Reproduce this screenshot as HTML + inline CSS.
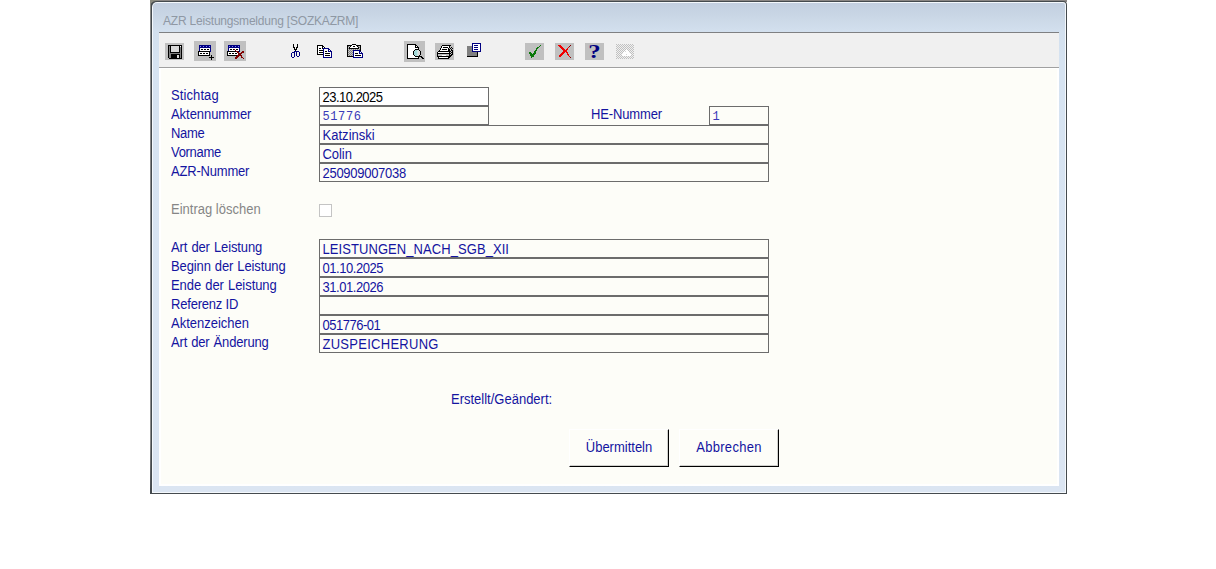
<!DOCTYPE html>
<html lang="de"><head><meta charset="utf-8"><title>AZR Leistungsmeldung</title>
<style>
html,body{margin:0;padding:0;background:#fff;}
body{width:1216px;height:569px;position:relative;overflow:hidden;font-family:"Liberation Sans",sans-serif;font-size:13px;color:#1414a0;}
.abs{position:absolute;}
#topstrip{left:150px;top:0;width:917px;height:2px;background:#8a8684;}
#corner{left:150px;top:0;width:8px;height:8px;background:#8a8a7e;}
#win{left:150px;top:1px;width:917px;height:493px;box-sizing:border-box;border-radius:6px 4px 0 0;background:#444a4e;}
#frame{left:152px;top:2px;width:914px;height:491px;border-radius:5px 3px 0 0;background:#f4f8fc;}
#frame2{left:153px;top:3px;width:912px;height:489px;border-radius:4px 2px 0 0;background:linear-gradient(#c3cfe0 0px,#c9d6e5 12px,#d3e0ee 29px,#d6e3f1 60px,#dbe5f2 489px);}
#title{left:163px;top:14px;font-size:12px;line-height:15px;color:#8f98a4;white-space:nowrap;letter-spacing:-0.2px;}
#tbline{left:159px;top:32px;width:900px;height:1px;background:#7f8082;}
#toolbar{left:159px;top:33px;width:900px;height:34px;background:#f0f0f0;}
#tbline2{left:159px;top:67px;width:900px;height:1px;background:#a0a0a0;}
#content{left:159px;top:68px;width:900px;height:418px;background:#fdfdf8;box-sizing:border-box;border:solid #fff;border-width:1px 2px 2px 2px;}
.lbl{position:absolute;left:171px;line-height:15px;white-space:nowrap;transform:scaleY(1.08);transform-origin:0 12px;}
.box{position:absolute;box-sizing:border-box;border:1px solid #6c6c6c;height:19px;left:319px;width:450px;line-height:15px;padding:2px 0 0 2.5px;white-space:nowrap;background:#fdfdf8;}
.box span{display:inline-block;transform:scaleY(1.08);transform-origin:0 12px;}
.mono{font-family:"Liberation Mono",monospace;font-size:12px;color:#3a3ab8;}
.mono span{transform:none !important;position:relative;top:1px;}
.btn{position:absolute;box-sizing:border-box;top:429px;width:100px;height:38px;border-top:1px solid #fff;border-left:1px solid #fff;border-right:1px solid #000;border-bottom:1px solid #000;background:#fdfdf8;text-align:center;line-height:15px;padding-top:10px;}
.btn span{display:inline-block;transform:scaleY(1.08);transform-origin:0 12px;}
.btn i{position:absolute;left:0;top:0;right:0;bottom:0;border-right:1px solid #d0d0cc;border-bottom:1px solid #d0d0cc;}
#q{left:585px;top:42px;width:19px;height:19px;text-align:center;font-family:"Liberation Serif",serif;font-weight:bold;font-size:19px;line-height:19px;color:#000080;transform:scaleX(1.3);}
</style></head><body>
<div class="abs" id="topstrip"></div>
<div class="abs" id="corner"></div>
<div class="abs" id="win"></div>
<div class="abs" style="left:150px;top:0;width:1px;height:488px;background:linear-gradient(#8a8a80,#8a8a8a 20px,#8a8a8a 440px,#4a4e52)"></div>
<div class="abs" id="frame"></div>
<div class="abs" id="frame2"></div>
<div class="abs" id="title">AZR Leistungsmeldung [SOZKAZRM]</div>
<div class="abs" id="tbline"></div>
<div class="abs" id="toolbar"></div>
<div class="abs" id="tbline2"></div>
<div class="abs" id="content"></div>
<svg class="abs" style="left:0;top:0" width="1216" height="569" shape-rendering="crispEdges">
<defs><pattern id="dith" x="0" y="0" width="2" height="2" patternUnits="userSpaceOnUse"><rect width="2" height="2" fill="#f0f0f0"/><rect x="0" y="0" width="1" height="1" fill="#c0c0c0"/><rect x="1" y="1" width="1" height="1" fill="#c0c0c0"/></pattern></defs>
<rect x="165" y="43" width="19" height="17" fill="#c0c0c0"/><rect x="168" y="45" width="14" height="1" fill="#000000"/><rect x="168" y="46" width="1" height="1" fill="#000000"/><rect x="169" y="46" width="1" height="1" fill="#808080"/><rect x="170" y="46" width="1" height="1" fill="#000000"/><rect x="171" y="46" width="8" height="1" fill="#d8d8d8"/><rect x="179" y="46" width="1" height="1" fill="#000000"/><rect x="180" y="46" width="1" height="1" fill="#ffffff"/><rect x="181" y="46" width="1" height="1" fill="#000000"/><rect x="168" y="47" width="1" height="1" fill="#000000"/><rect x="169" y="47" width="1" height="1" fill="#808080"/><rect x="170" y="47" width="1" height="1" fill="#000000"/><rect x="171" y="47" width="8" height="1" fill="#d8d8d8"/><rect x="179" y="47" width="1" height="1" fill="#000000"/><rect x="180" y="47" width="1" height="1" fill="#808080"/><rect x="181" y="47" width="1" height="1" fill="#000000"/><rect x="168" y="48" width="1" height="1" fill="#000000"/><rect x="169" y="48" width="1" height="1" fill="#808080"/><rect x="170" y="48" width="1" height="1" fill="#000000"/><rect x="171" y="48" width="8" height="1" fill="#d8d8d8"/><rect x="179" y="48" width="1" height="1" fill="#000000"/><rect x="180" y="48" width="1" height="1" fill="#808080"/><rect x="181" y="48" width="1" height="1" fill="#000000"/><rect x="168" y="49" width="1" height="1" fill="#000000"/><rect x="169" y="49" width="1" height="1" fill="#808080"/><rect x="170" y="49" width="1" height="1" fill="#000000"/><rect x="171" y="49" width="8" height="1" fill="#d8d8d8"/><rect x="179" y="49" width="1" height="1" fill="#000000"/><rect x="180" y="49" width="1" height="1" fill="#808080"/><rect x="181" y="49" width="1" height="1" fill="#000000"/><rect x="168" y="50" width="1" height="1" fill="#000000"/><rect x="169" y="50" width="1" height="1" fill="#808080"/><rect x="170" y="50" width="1" height="1" fill="#000000"/><rect x="171" y="50" width="8" height="1" fill="#d8d8d8"/><rect x="179" y="50" width="1" height="1" fill="#000000"/><rect x="180" y="50" width="1" height="1" fill="#808080"/><rect x="181" y="50" width="1" height="1" fill="#000000"/><rect x="168" y="51" width="1" height="1" fill="#000000"/><rect x="169" y="51" width="1" height="1" fill="#808080"/><rect x="170" y="51" width="1" height="1" fill="#000000"/><rect x="171" y="51" width="8" height="1" fill="#d8d8d8"/><rect x="179" y="51" width="1" height="1" fill="#000000"/><rect x="180" y="51" width="1" height="1" fill="#808080"/><rect x="181" y="51" width="1" height="1" fill="#000000"/><rect x="168" y="52" width="1" height="1" fill="#000000"/><rect x="169" y="52" width="1" height="1" fill="#808080"/><rect x="170" y="52" width="10" height="1" fill="#000000"/><rect x="180" y="52" width="1" height="1" fill="#808080"/><rect x="181" y="52" width="1" height="1" fill="#000000"/><rect x="168" y="53" width="1" height="1" fill="#000000"/><rect x="169" y="53" width="12" height="1" fill="#808080"/><rect x="181" y="53" width="1" height="1" fill="#000000"/><rect x="168" y="54" width="1" height="1" fill="#000000"/><rect x="169" y="54" width="2" height="1" fill="#808080"/><rect x="171" y="54" width="9" height="1" fill="#000000"/><rect x="180" y="54" width="1" height="1" fill="#808080"/><rect x="181" y="54" width="1" height="1" fill="#000000"/><rect x="168" y="55" width="1" height="1" fill="#000000"/><rect x="169" y="55" width="2" height="1" fill="#808080"/><rect x="171" y="55" width="6" height="1" fill="#000000"/><rect x="177" y="55" width="2" height="1" fill="#d8d8d8"/><rect x="179" y="55" width="1" height="1" fill="#000000"/><rect x="180" y="55" width="1" height="1" fill="#808080"/><rect x="181" y="55" width="1" height="1" fill="#000000"/><rect x="168" y="56" width="1" height="1" fill="#000000"/><rect x="169" y="56" width="2" height="1" fill="#808080"/><rect x="171" y="56" width="6" height="1" fill="#000000"/><rect x="177" y="56" width="2" height="1" fill="#d8d8d8"/><rect x="179" y="56" width="1" height="1" fill="#000000"/><rect x="180" y="56" width="1" height="1" fill="#808080"/><rect x="181" y="56" width="1" height="1" fill="#000000"/><rect x="168" y="57" width="1" height="1" fill="#000000"/><rect x="169" y="57" width="2" height="1" fill="#808080"/><rect x="171" y="57" width="6" height="1" fill="#000000"/><rect x="177" y="57" width="2" height="1" fill="#d8d8d8"/><rect x="179" y="57" width="1" height="1" fill="#000000"/><rect x="180" y="57" width="1" height="1" fill="#808080"/><rect x="181" y="57" width="1" height="1" fill="#000000"/><rect x="169" y="58" width="13" height="1" fill="#000000"/><rect x="194" y="41" width="22" height="20" fill="#c0c0c0"/><rect x="199" y="45" width="12" height="1" fill="#000080"/><rect x="199" y="46" width="1" height="1" fill="#000080"/><rect x="200" y="46" width="1" height="1" fill="#8080ff"/><rect x="201" y="46" width="2" height="1" fill="#000080"/><rect x="203" y="46" width="1" height="1" fill="#8080ff"/><rect x="204" y="46" width="2" height="1" fill="#000080"/><rect x="206" y="46" width="1" height="1" fill="#8080ff"/><rect x="207" y="46" width="2" height="1" fill="#000080"/><rect x="209" y="46" width="1" height="1" fill="#8080ff"/><rect x="210" y="46" width="1" height="1" fill="#000080"/><rect x="199" y="47" width="12" height="1" fill="#000080"/><rect x="199" y="48" width="1" height="1" fill="#000080"/><rect x="200" y="48" width="10" height="1" fill="#ffffff"/><rect x="210" y="48" width="1" height="1" fill="#000080"/><rect x="199" y="49" width="1" height="1" fill="#000080"/><rect x="200" y="49" width="1" height="1" fill="#ffffff"/><rect x="201" y="49" width="2" height="1" fill="#000000"/><rect x="203" y="49" width="1" height="1" fill="#ffffff"/><rect x="204" y="49" width="2" height="1" fill="#000000"/><rect x="206" y="49" width="1" height="1" fill="#ffffff"/><rect x="207" y="49" width="2" height="1" fill="#000000"/><rect x="209" y="49" width="1" height="1" fill="#ffffff"/><rect x="210" y="49" width="1" height="1" fill="#000080"/><rect x="199" y="50" width="1" height="1" fill="#000080"/><rect x="200" y="50" width="10" height="1" fill="#ffffff"/><rect x="210" y="50" width="1" height="1" fill="#000080"/><rect x="198" y="51" width="12" height="1" fill="#000000"/><rect x="210" y="51" width="1" height="1" fill="#000080"/><rect x="198" y="52" width="1" height="1" fill="#000000"/><rect x="199" y="52" width="10" height="1" fill="#ffffff"/><rect x="209" y="52" width="1" height="1" fill="#000000"/><rect x="198" y="53" width="1" height="1" fill="#000000"/><rect x="199" y="53" width="1" height="1" fill="#ffffff"/><rect x="200" y="53" width="2" height="1" fill="#000000"/><rect x="202" y="53" width="1" height="1" fill="#ffffff"/><rect x="203" y="53" width="2" height="1" fill="#000000"/><rect x="205" y="53" width="1" height="1" fill="#ffffff"/><rect x="206" y="53" width="2" height="1" fill="#000000"/><rect x="208" y="53" width="1" height="1" fill="#ffffff"/><rect x="209" y="53" width="1" height="1" fill="#000000"/><rect x="198" y="54" width="1" height="1" fill="#000000"/><rect x="199" y="54" width="10" height="1" fill="#ffffff"/><rect x="209" y="54" width="1" height="1" fill="#000000"/><rect x="198" y="55" width="12" height="1" fill="#000000"/><rect x="211" y="55" width="1" height="1" fill="#000000"/><rect x="211" y="56" width="1" height="1" fill="#000000"/><rect x="209" y="57" width="5" height="1" fill="#000000"/><rect x="211" y="58" width="1" height="1" fill="#000000"/><rect x="211" y="59" width="1" height="1" fill="#000000"/><rect x="224" y="41" width="22" height="20" fill="#c0c0c0"/><rect x="228" y="45" width="12" height="1" fill="#000080"/><rect x="228" y="46" width="1" height="1" fill="#000080"/><rect x="229" y="46" width="1" height="1" fill="#8080ff"/><rect x="230" y="46" width="2" height="1" fill="#000080"/><rect x="232" y="46" width="1" height="1" fill="#8080ff"/><rect x="233" y="46" width="2" height="1" fill="#000080"/><rect x="235" y="46" width="1" height="1" fill="#8080ff"/><rect x="236" y="46" width="2" height="1" fill="#000080"/><rect x="238" y="46" width="1" height="1" fill="#8080ff"/><rect x="239" y="46" width="1" height="1" fill="#000080"/><rect x="228" y="47" width="12" height="1" fill="#000080"/><rect x="228" y="48" width="1" height="1" fill="#000080"/><rect x="229" y="48" width="10" height="1" fill="#ffffff"/><rect x="239" y="48" width="1" height="1" fill="#000080"/><rect x="228" y="49" width="1" height="1" fill="#000080"/><rect x="229" y="49" width="1" height="1" fill="#ffffff"/><rect x="230" y="49" width="2" height="1" fill="#000000"/><rect x="232" y="49" width="1" height="1" fill="#ffffff"/><rect x="233" y="49" width="2" height="1" fill="#000000"/><rect x="235" y="49" width="1" height="1" fill="#ffffff"/><rect x="236" y="49" width="2" height="1" fill="#000000"/><rect x="238" y="49" width="1" height="1" fill="#ffffff"/><rect x="239" y="49" width="1" height="1" fill="#000080"/><rect x="228" y="50" width="1" height="1" fill="#000080"/><rect x="229" y="50" width="10" height="1" fill="#ffffff"/><rect x="239" y="50" width="1" height="1" fill="#000080"/><rect x="227" y="51" width="12" height="1" fill="#000000"/><rect x="239" y="51" width="1" height="1" fill="#000080"/><rect x="227" y="52" width="1" height="1" fill="#000000"/><rect x="228" y="52" width="10" height="1" fill="#ffffff"/><rect x="238" y="52" width="1" height="1" fill="#000000"/><rect x="227" y="53" width="1" height="1" fill="#000000"/><rect x="228" y="53" width="1" height="1" fill="#ffffff"/><rect x="229" y="53" width="2" height="1" fill="#000000"/><rect x="231" y="53" width="1" height="1" fill="#ffffff"/><rect x="232" y="53" width="2" height="1" fill="#000000"/><rect x="234" y="53" width="1" height="1" fill="#ffffff"/><rect x="235" y="53" width="2" height="1" fill="#000000"/><rect x="237" y="53" width="1" height="1" fill="#ffffff"/><rect x="238" y="53" width="1" height="1" fill="#000000"/><rect x="227" y="54" width="1" height="1" fill="#000000"/><rect x="228" y="54" width="10" height="1" fill="#ffffff"/><rect x="238" y="54" width="1" height="1" fill="#000000"/><rect x="227" y="55" width="12" height="1" fill="#000000"/><rect x="234" y="49" width="1" height="1" fill="#800000"/><rect x="235" y="50" width="1" height="1" fill="#800000"/><rect x="236" y="51" width="2" height="1" fill="#800000"/><rect x="242" y="51" width="2" height="1" fill="#800000"/><rect x="237" y="52" width="2" height="1" fill="#800000"/><rect x="241" y="52" width="3" height="1" fill="#800000"/><rect x="238" y="53" width="4" height="1" fill="#800000"/><rect x="238" y="54" width="3" height="1" fill="#800000"/><rect x="237" y="55" width="5" height="1" fill="#800000"/><rect x="236" y="56" width="3" height="1" fill="#800000"/><rect x="241" y="56" width="1" height="1" fill="#800000"/><rect x="235" y="57" width="3" height="1" fill="#800000"/><rect x="241" y="57" width="2" height="1" fill="#800000"/><rect x="235" y="58" width="2" height="1" fill="#800000"/><rect x="243" y="58" width="1" height="1" fill="#800000"/><rect x="293" y="44" width="1" height="1" fill="#000000"/><rect x="297" y="44" width="1" height="1" fill="#000000"/><rect x="293" y="45" width="1" height="1" fill="#000000"/><rect x="297" y="45" width="1" height="1" fill="#000000"/><rect x="293" y="46" width="1" height="1" fill="#000000"/><rect x="297" y="46" width="1" height="1" fill="#000000"/><rect x="293" y="47" width="2" height="1" fill="#000000"/><rect x="296" y="47" width="2" height="1" fill="#000000"/><rect x="294" y="48" width="1" height="1" fill="#000000"/><rect x="296" y="48" width="1" height="1" fill="#000000"/><rect x="294" y="49" width="3" height="1" fill="#000000"/><rect x="295" y="50" width="1" height="1" fill="#000000"/><rect x="294" y="51" width="5" height="1" fill="#000080"/><rect x="292" y="52" width="3" height="1" fill="#000080"/><rect x="296" y="52" width="1" height="1" fill="#000080"/><rect x="299" y="52" width="1" height="1" fill="#000080"/><rect x="291" y="53" width="1" height="1" fill="#000080"/><rect x="294" y="53" width="1" height="1" fill="#000080"/><rect x="296" y="53" width="1" height="1" fill="#000080"/><rect x="299" y="53" width="1" height="1" fill="#000080"/><rect x="291" y="54" width="1" height="1" fill="#000080"/><rect x="294" y="54" width="1" height="1" fill="#000080"/><rect x="296" y="54" width="1" height="1" fill="#000080"/><rect x="299" y="54" width="1" height="1" fill="#000080"/><rect x="291" y="55" width="1" height="1" fill="#000080"/><rect x="294" y="55" width="1" height="1" fill="#000080"/><rect x="296" y="55" width="1" height="1" fill="#000080"/><rect x="299" y="55" width="1" height="1" fill="#000080"/><rect x="291" y="56" width="1" height="1" fill="#000080"/><rect x="294" y="56" width="1" height="1" fill="#000080"/><rect x="297" y="56" width="2" height="1" fill="#000080"/><rect x="292" y="57" width="2" height="1" fill="#000080"/><rect x="317" y="45" width="6" height="1" fill="#000000"/><rect x="317" y="46" width="1" height="1" fill="#000000"/><rect x="318" y="46" width="4" height="1" fill="#ffffff"/><rect x="322" y="46" width="2" height="1" fill="#000000"/><rect x="317" y="47" width="1" height="1" fill="#000000"/><rect x="318" y="47" width="4" height="1" fill="#ffffff"/><rect x="322" y="47" width="1" height="1" fill="#000000"/><rect x="323" y="47" width="1" height="1" fill="#ffffff"/><rect x="324" y="47" width="1" height="1" fill="#000000"/><rect x="317" y="48" width="1" height="1" fill="#000000"/><rect x="318" y="48" width="1" height="1" fill="#ffffff"/><rect x="319" y="48" width="2" height="1" fill="#000000"/><rect x="321" y="48" width="1" height="1" fill="#ffffff"/><rect x="322" y="48" width="3" height="1" fill="#000000"/><rect x="317" y="49" width="1" height="1" fill="#000000"/><rect x="318" y="49" width="6" height="1" fill="#ffffff"/><rect x="324" y="49" width="1" height="1" fill="#000000"/><rect x="317" y="50" width="1" height="1" fill="#000000"/><rect x="318" y="50" width="1" height="1" fill="#ffffff"/><rect x="319" y="50" width="4" height="1" fill="#000000"/><rect x="323" y="50" width="1" height="1" fill="#ffffff"/><rect x="324" y="50" width="1" height="1" fill="#000000"/><rect x="317" y="51" width="1" height="1" fill="#000000"/><rect x="318" y="51" width="6" height="1" fill="#ffffff"/><rect x="324" y="51" width="1" height="1" fill="#000000"/><rect x="317" y="52" width="1" height="1" fill="#000000"/><rect x="318" y="52" width="1" height="1" fill="#ffffff"/><rect x="319" y="52" width="4" height="1" fill="#000000"/><rect x="323" y="52" width="1" height="1" fill="#ffffff"/><rect x="324" y="52" width="1" height="1" fill="#000000"/><rect x="317" y="53" width="1" height="1" fill="#000000"/><rect x="318" y="53" width="6" height="1" fill="#ffffff"/><rect x="324" y="53" width="1" height="1" fill="#000000"/><rect x="317" y="54" width="8" height="1" fill="#000000"/><rect x="323" y="48" width="6" height="1" fill="#000080"/><rect x="323" y="49" width="1" height="1" fill="#000080"/><rect x="324" y="49" width="4" height="1" fill="#ffffff"/><rect x="328" y="49" width="2" height="1" fill="#000080"/><rect x="323" y="50" width="1" height="1" fill="#000080"/><rect x="324" y="50" width="4" height="1" fill="#ffffff"/><rect x="328" y="50" width="1" height="1" fill="#000080"/><rect x="329" y="50" width="1" height="1" fill="#ffffff"/><rect x="330" y="50" width="1" height="1" fill="#000080"/><rect x="323" y="51" width="1" height="1" fill="#000080"/><rect x="324" y="51" width="1" height="1" fill="#ffffff"/><rect x="325" y="51" width="2" height="1" fill="#000000"/><rect x="327" y="51" width="1" height="1" fill="#ffffff"/><rect x="328" y="51" width="4" height="1" fill="#000080"/><rect x="323" y="52" width="1" height="1" fill="#000080"/><rect x="324" y="52" width="7" height="1" fill="#ffffff"/><rect x="331" y="52" width="1" height="1" fill="#000080"/><rect x="323" y="53" width="1" height="1" fill="#000080"/><rect x="324" y="53" width="1" height="1" fill="#ffffff"/><rect x="325" y="53" width="5" height="1" fill="#000000"/><rect x="330" y="53" width="1" height="1" fill="#ffffff"/><rect x="331" y="53" width="1" height="1" fill="#000080"/><rect x="323" y="54" width="1" height="1" fill="#000080"/><rect x="324" y="54" width="7" height="1" fill="#ffffff"/><rect x="331" y="54" width="1" height="1" fill="#000080"/><rect x="323" y="55" width="1" height="1" fill="#000080"/><rect x="324" y="55" width="1" height="1" fill="#ffffff"/><rect x="325" y="55" width="5" height="1" fill="#000000"/><rect x="330" y="55" width="1" height="1" fill="#ffffff"/><rect x="331" y="55" width="1" height="1" fill="#000080"/><rect x="323" y="56" width="1" height="1" fill="#000080"/><rect x="324" y="56" width="7" height="1" fill="#ffffff"/><rect x="331" y="56" width="1" height="1" fill="#000080"/><rect x="323" y="57" width="9" height="1" fill="#000080"/><rect x="352" y="44" width="4" height="1" fill="#000000"/><rect x="347" y="45" width="5" height="1" fill="#000000"/><rect x="352" y="45" width="4" height="1" fill="#ffffff"/><rect x="356" y="45" width="5" height="1" fill="#000000"/><rect x="347" y="46" width="1" height="1" fill="#000000"/><rect x="348" y="46" width="1" height="1" fill="#808080"/><rect x="349" y="46" width="1" height="1" fill="#c8c8c8"/><rect x="350" y="46" width="1" height="1" fill="#000000"/><rect x="351" y="46" width="2" height="1" fill="#ffffff"/><rect x="353" y="46" width="2" height="1" fill="#000000"/><rect x="355" y="46" width="2" height="1" fill="#ffffff"/><rect x="357" y="46" width="1" height="1" fill="#000000"/><rect x="358" y="46" width="1" height="1" fill="#808080"/><rect x="359" y="46" width="1" height="1" fill="#c8c8c8"/><rect x="360" y="46" width="1" height="1" fill="#000000"/><rect x="347" y="47" width="1" height="1" fill="#000000"/><rect x="348" y="47" width="1" height="1" fill="#c8c8c8"/><rect x="349" y="47" width="1" height="1" fill="#000000"/><rect x="350" y="47" width="8" height="1" fill="#ffffff"/><rect x="358" y="47" width="1" height="1" fill="#000000"/><rect x="359" y="47" width="1" height="1" fill="#808080"/><rect x="360" y="47" width="1" height="1" fill="#000000"/><rect x="347" y="48" width="1" height="1" fill="#000000"/><rect x="348" y="48" width="1" height="1" fill="#808080"/><rect x="349" y="48" width="10" height="1" fill="#000000"/><rect x="359" y="48" width="1" height="1" fill="#c8c8c8"/><rect x="360" y="48" width="1" height="1" fill="#000000"/><rect x="347" y="49" width="1" height="1" fill="#000000"/><rect x="348" y="49" width="1" height="1" fill="#c8c8c8"/><rect x="349" y="49" width="1" height="1" fill="#808080"/><rect x="350" y="49" width="1" height="1" fill="#c8c8c8"/><rect x="351" y="49" width="1" height="1" fill="#808080"/><rect x="352" y="49" width="1" height="1" fill="#c8c8c8"/><rect x="353" y="49" width="1" height="1" fill="#808080"/><rect x="354" y="49" width="1" height="1" fill="#c8c8c8"/><rect x="355" y="49" width="1" height="1" fill="#808080"/><rect x="356" y="49" width="1" height="1" fill="#c8c8c8"/><rect x="357" y="49" width="1" height="1" fill="#808080"/><rect x="358" y="49" width="1" height="1" fill="#c8c8c8"/><rect x="359" y="49" width="1" height="1" fill="#808080"/><rect x="360" y="49" width="1" height="1" fill="#000000"/><rect x="347" y="50" width="1" height="1" fill="#000000"/><rect x="348" y="50" width="1" height="1" fill="#808080"/><rect x="349" y="50" width="1" height="1" fill="#c8c8c8"/><rect x="350" y="50" width="1" height="1" fill="#808080"/><rect x="351" y="50" width="1" height="1" fill="#c8c8c8"/><rect x="352" y="50" width="1" height="1" fill="#808080"/><rect x="353" y="50" width="1" height="1" fill="#c8c8c8"/><rect x="354" y="50" width="1" height="1" fill="#808080"/><rect x="355" y="50" width="1" height="1" fill="#c8c8c8"/><rect x="356" y="50" width="1" height="1" fill="#808080"/><rect x="357" y="50" width="1" height="1" fill="#c8c8c8"/><rect x="358" y="50" width="1" height="1" fill="#808080"/><rect x="359" y="50" width="1" height="1" fill="#c8c8c8"/><rect x="360" y="50" width="1" height="1" fill="#000000"/><rect x="347" y="51" width="1" height="1" fill="#000000"/><rect x="348" y="51" width="1" height="1" fill="#c8c8c8"/><rect x="349" y="51" width="1" height="1" fill="#808080"/><rect x="350" y="51" width="1" height="1" fill="#c8c8c8"/><rect x="351" y="51" width="1" height="1" fill="#808080"/><rect x="352" y="51" width="1" height="1" fill="#c8c8c8"/><rect x="353" y="51" width="1" height="1" fill="#808080"/><rect x="354" y="51" width="1" height="1" fill="#c8c8c8"/><rect x="355" y="51" width="1" height="1" fill="#808080"/><rect x="356" y="51" width="1" height="1" fill="#c8c8c8"/><rect x="357" y="51" width="1" height="1" fill="#808080"/><rect x="358" y="51" width="1" height="1" fill="#c8c8c8"/><rect x="359" y="51" width="1" height="1" fill="#808080"/><rect x="360" y="51" width="1" height="1" fill="#000000"/><rect x="347" y="52" width="1" height="1" fill="#000000"/><rect x="348" y="52" width="1" height="1" fill="#808080"/><rect x="349" y="52" width="1" height="1" fill="#c8c8c8"/><rect x="350" y="52" width="1" height="1" fill="#808080"/><rect x="351" y="52" width="1" height="1" fill="#c8c8c8"/><rect x="352" y="52" width="1" height="1" fill="#808080"/><rect x="353" y="52" width="1" height="1" fill="#c8c8c8"/><rect x="354" y="52" width="1" height="1" fill="#808080"/><rect x="355" y="52" width="1" height="1" fill="#c8c8c8"/><rect x="356" y="52" width="1" height="1" fill="#808080"/><rect x="357" y="52" width="1" height="1" fill="#c8c8c8"/><rect x="358" y="52" width="1" height="1" fill="#808080"/><rect x="359" y="52" width="1" height="1" fill="#c8c8c8"/><rect x="360" y="52" width="1" height="1" fill="#000000"/><rect x="347" y="53" width="1" height="1" fill="#000000"/><rect x="348" y="53" width="1" height="1" fill="#c8c8c8"/><rect x="349" y="53" width="1" height="1" fill="#808080"/><rect x="350" y="53" width="1" height="1" fill="#c8c8c8"/><rect x="351" y="53" width="1" height="1" fill="#808080"/><rect x="352" y="53" width="1" height="1" fill="#c8c8c8"/><rect x="353" y="53" width="1" height="1" fill="#808080"/><rect x="354" y="53" width="1" height="1" fill="#c8c8c8"/><rect x="355" y="53" width="1" height="1" fill="#808080"/><rect x="356" y="53" width="1" height="1" fill="#c8c8c8"/><rect x="357" y="53" width="1" height="1" fill="#808080"/><rect x="358" y="53" width="1" height="1" fill="#c8c8c8"/><rect x="359" y="53" width="1" height="1" fill="#808080"/><rect x="360" y="53" width="1" height="1" fill="#000000"/><rect x="347" y="54" width="1" height="1" fill="#000000"/><rect x="348" y="54" width="1" height="1" fill="#808080"/><rect x="349" y="54" width="1" height="1" fill="#c8c8c8"/><rect x="350" y="54" width="1" height="1" fill="#808080"/><rect x="351" y="54" width="1" height="1" fill="#c8c8c8"/><rect x="352" y="54" width="1" height="1" fill="#808080"/><rect x="353" y="54" width="1" height="1" fill="#c8c8c8"/><rect x="354" y="54" width="1" height="1" fill="#808080"/><rect x="355" y="54" width="1" height="1" fill="#c8c8c8"/><rect x="356" y="54" width="1" height="1" fill="#808080"/><rect x="357" y="54" width="1" height="1" fill="#c8c8c8"/><rect x="358" y="54" width="1" height="1" fill="#808080"/><rect x="359" y="54" width="1" height="1" fill="#c8c8c8"/><rect x="360" y="54" width="1" height="1" fill="#000000"/><rect x="347" y="55" width="1" height="1" fill="#000000"/><rect x="348" y="55" width="1" height="1" fill="#c8c8c8"/><rect x="349" y="55" width="1" height="1" fill="#808080"/><rect x="350" y="55" width="1" height="1" fill="#c8c8c8"/><rect x="351" y="55" width="1" height="1" fill="#808080"/><rect x="352" y="55" width="1" height="1" fill="#c8c8c8"/><rect x="353" y="55" width="1" height="1" fill="#808080"/><rect x="354" y="55" width="1" height="1" fill="#c8c8c8"/><rect x="355" y="55" width="1" height="1" fill="#808080"/><rect x="356" y="55" width="1" height="1" fill="#c8c8c8"/><rect x="357" y="55" width="1" height="1" fill="#808080"/><rect x="358" y="55" width="1" height="1" fill="#c8c8c8"/><rect x="359" y="55" width="1" height="1" fill="#808080"/><rect x="360" y="55" width="1" height="1" fill="#000000"/><rect x="347" y="56" width="14" height="1" fill="#000000"/><rect x="353" y="50" width="7" height="1" fill="#000080"/><rect x="353" y="51" width="1" height="1" fill="#000080"/><rect x="354" y="51" width="5" height="1" fill="#ffffff"/><rect x="359" y="51" width="2" height="1" fill="#000080"/><rect x="353" y="52" width="1" height="1" fill="#000080"/><rect x="354" y="52" width="5" height="1" fill="#ffffff"/><rect x="359" y="52" width="1" height="1" fill="#000080"/><rect x="360" y="52" width="1" height="1" fill="#ffffff"/><rect x="361" y="52" width="1" height="1" fill="#000080"/><rect x="353" y="53" width="1" height="1" fill="#000080"/><rect x="354" y="53" width="1" height="1" fill="#ffffff"/><rect x="355" y="53" width="3" height="1" fill="#000000"/><rect x="358" y="53" width="1" height="1" fill="#ffffff"/><rect x="359" y="53" width="4" height="1" fill="#000080"/><rect x="353" y="54" width="1" height="1" fill="#000080"/><rect x="354" y="54" width="8" height="1" fill="#ffffff"/><rect x="362" y="54" width="1" height="1" fill="#000080"/><rect x="353" y="55" width="1" height="1" fill="#000080"/><rect x="354" y="55" width="1" height="1" fill="#ffffff"/><rect x="355" y="55" width="6" height="1" fill="#000000"/><rect x="361" y="55" width="1" height="1" fill="#ffffff"/><rect x="362" y="55" width="1" height="1" fill="#000080"/><rect x="353" y="56" width="1" height="1" fill="#000080"/><rect x="354" y="56" width="8" height="1" fill="#ffffff"/><rect x="362" y="56" width="1" height="1" fill="#000080"/><rect x="353" y="57" width="10" height="1" fill="#000080"/><rect x="404" y="41" width="21" height="21" fill="#c0c0c0"/><rect x="407" y="44" width="9" height="1" fill="#000000"/><rect x="407" y="45" width="1" height="1" fill="#000000"/><rect x="408" y="45" width="7" height="1" fill="#ffffff"/><rect x="415" y="45" width="2" height="1" fill="#000000"/><rect x="407" y="46" width="1" height="1" fill="#000000"/><rect x="408" y="46" width="7" height="1" fill="#ffffff"/><rect x="415" y="46" width="1" height="1" fill="#000000"/><rect x="416" y="46" width="1" height="1" fill="#ffffff"/><rect x="417" y="46" width="1" height="1" fill="#000000"/><rect x="407" y="47" width="1" height="1" fill="#000000"/><rect x="408" y="47" width="7" height="1" fill="#ffffff"/><rect x="415" y="47" width="4" height="1" fill="#000000"/><rect x="407" y="48" width="1" height="1" fill="#000000"/><rect x="408" y="48" width="10" height="1" fill="#ffffff"/><rect x="418" y="48" width="1" height="1" fill="#000000"/><rect x="407" y="49" width="1" height="1" fill="#000000"/><rect x="408" y="49" width="10" height="1" fill="#ffffff"/><rect x="418" y="49" width="1" height="1" fill="#000000"/><rect x="407" y="50" width="1" height="1" fill="#000000"/><rect x="408" y="50" width="10" height="1" fill="#ffffff"/><rect x="418" y="50" width="1" height="1" fill="#000000"/><rect x="407" y="51" width="1" height="1" fill="#000000"/><rect x="408" y="51" width="10" height="1" fill="#ffffff"/><rect x="418" y="51" width="1" height="1" fill="#000000"/><rect x="407" y="52" width="1" height="1" fill="#000000"/><rect x="408" y="52" width="10" height="1" fill="#ffffff"/><rect x="418" y="52" width="1" height="1" fill="#000000"/><rect x="407" y="53" width="1" height="1" fill="#000000"/><rect x="408" y="53" width="10" height="1" fill="#ffffff"/><rect x="418" y="53" width="1" height="1" fill="#000000"/><rect x="407" y="54" width="1" height="1" fill="#000000"/><rect x="408" y="54" width="10" height="1" fill="#ffffff"/><rect x="418" y="54" width="1" height="1" fill="#000000"/><rect x="407" y="55" width="1" height="1" fill="#000000"/><rect x="408" y="55" width="10" height="1" fill="#ffffff"/><rect x="418" y="55" width="1" height="1" fill="#000000"/><rect x="407" y="56" width="1" height="1" fill="#000000"/><rect x="408" y="56" width="10" height="1" fill="#ffffff"/><rect x="418" y="56" width="1" height="1" fill="#000000"/><rect x="407" y="57" width="1" height="1" fill="#000000"/><rect x="408" y="57" width="10" height="1" fill="#ffffff"/><rect x="418" y="57" width="1" height="1" fill="#000000"/><rect x="407" y="58" width="12" height="1" fill="#000000"/><rect x="415" y="49" width="4" height="1" fill="#000000"/><rect x="414" y="50" width="1" height="1" fill="#000000"/><rect x="415" y="50" width="2" height="1" fill="#a2d8d8"/><rect x="417" y="50" width="1" height="1" fill="#c4e6e2"/><rect x="418" y="50" width="1" height="1" fill="#d8d8d8"/><rect x="419" y="50" width="1" height="1" fill="#000000"/><rect x="413" y="51" width="1" height="1" fill="#000000"/><rect x="414" y="51" width="3" height="1" fill="#a2d8d8"/><rect x="417" y="51" width="1" height="1" fill="#c4e6e2"/><rect x="418" y="51" width="2" height="1" fill="#d8d8d8"/><rect x="420" y="51" width="1" height="1" fill="#000000"/><rect x="413" y="52" width="1" height="1" fill="#000000"/><rect x="414" y="52" width="3" height="1" fill="#a2d8d8"/><rect x="417" y="52" width="1" height="1" fill="#c4e6e2"/><rect x="418" y="52" width="2" height="1" fill="#d8d8d8"/><rect x="420" y="52" width="1" height="1" fill="#000000"/><rect x="413" y="53" width="1" height="1" fill="#000000"/><rect x="414" y="53" width="3" height="1" fill="#a2d8d8"/><rect x="417" y="53" width="1" height="1" fill="#c4e6e2"/><rect x="418" y="53" width="2" height="1" fill="#d8d8d8"/><rect x="420" y="53" width="1" height="1" fill="#000000"/><rect x="413" y="54" width="1" height="1" fill="#000000"/><rect x="414" y="54" width="3" height="1" fill="#a2d8d8"/><rect x="417" y="54" width="1" height="1" fill="#c4e6e2"/><rect x="418" y="54" width="2" height="1" fill="#d8d8d8"/><rect x="420" y="54" width="1" height="1" fill="#000000"/><rect x="414" y="55" width="1" height="1" fill="#000000"/><rect x="415" y="55" width="2" height="1" fill="#a2d8d8"/><rect x="417" y="55" width="1" height="1" fill="#c4e6e2"/><rect x="418" y="55" width="1" height="1" fill="#d8d8d8"/><rect x="419" y="55" width="1" height="1" fill="#000000"/><rect x="415" y="56" width="7" height="1" fill="#000000"/><rect x="421" y="57" width="2" height="1" fill="#000000"/><rect x="422" y="58" width="2" height="1" fill="#000000"/><rect x="435" y="43" width="19" height="17" fill="#c0c0c0"/><rect x="442" y="45" width="9" height="1" fill="#000000"/><rect x="441" y="46" width="1" height="1" fill="#000000"/><rect x="442" y="46" width="7" height="1" fill="#ffffff"/><rect x="449" y="46" width="1" height="1" fill="#000000"/><rect x="441" y="47" width="1" height="1" fill="#000000"/><rect x="442" y="47" width="1" height="1" fill="#ffffff"/><rect x="443" y="47" width="5" height="1" fill="#000000"/><rect x="448" y="47" width="1" height="1" fill="#ffffff"/><rect x="449" y="47" width="1" height="1" fill="#000000"/><rect x="451" y="47" width="1" height="1" fill="#000000"/><rect x="440" y="48" width="1" height="1" fill="#000000"/><rect x="441" y="48" width="7" height="1" fill="#ffffff"/><rect x="448" y="48" width="1" height="1" fill="#000000"/><rect x="450" y="48" width="1" height="1" fill="#000000"/><rect x="451" y="48" width="1" height="1" fill="#c0c0c0"/><rect x="452" y="48" width="1" height="1" fill="#000000"/><rect x="440" y="49" width="1" height="1" fill="#000000"/><rect x="441" y="49" width="1" height="1" fill="#ffffff"/><rect x="442" y="49" width="5" height="1" fill="#000000"/><rect x="447" y="49" width="1" height="1" fill="#ffffff"/><rect x="448" y="49" width="2" height="1" fill="#000000"/><rect x="450" y="49" width="1" height="1" fill="#c0c0c0"/><rect x="451" y="49" width="1" height="1" fill="#000000"/><rect x="452" y="49" width="1" height="1" fill="#c0c0c0"/><rect x="439" y="50" width="1" height="1" fill="#000000"/><rect x="440" y="50" width="8" height="1" fill="#ffffff"/><rect x="448" y="50" width="2" height="1" fill="#000000"/><rect x="450" y="50" width="1" height="1" fill="#c0c0c0"/><rect x="451" y="50" width="2" height="1" fill="#000000"/><rect x="438" y="51" width="13" height="1" fill="#000000"/><rect x="451" y="51" width="1" height="1" fill="#c0c0c0"/><rect x="452" y="51" width="1" height="1" fill="#000000"/><rect x="437" y="52" width="1" height="1" fill="#000000"/><rect x="438" y="52" width="11" height="1" fill="#ffffff"/><rect x="449" y="52" width="1" height="1" fill="#000000"/><rect x="450" y="52" width="1" height="1" fill="#c0c0c0"/><rect x="451" y="52" width="2" height="1" fill="#000000"/><rect x="437" y="53" width="14" height="1" fill="#000000"/><rect x="451" y="53" width="1" height="1" fill="#c0c0c0"/><rect x="452" y="53" width="1" height="1" fill="#000000"/><rect x="437" y="54" width="1" height="1" fill="#000000"/><rect x="438" y="54" width="11" height="1" fill="#c0c0c0"/><rect x="449" y="54" width="1" height="1" fill="#000000"/><rect x="450" y="54" width="1" height="1" fill="#c0c0c0"/><rect x="451" y="54" width="2" height="1" fill="#000000"/><rect x="437" y="55" width="1" height="1" fill="#000000"/><rect x="438" y="55" width="4" height="1" fill="#c0c0c0"/><rect x="442" y="55" width="4" height="1" fill="#ffffff"/><rect x="446" y="55" width="3" height="1" fill="#c0c0c0"/><rect x="449" y="55" width="3" height="1" fill="#000000"/><rect x="437" y="56" width="14" height="1" fill="#000000"/><rect x="438" y="57" width="1" height="1" fill="#000000"/><rect x="439" y="57" width="9" height="1" fill="#ffffff"/><rect x="448" y="57" width="2" height="1" fill="#000000"/><rect x="438" y="58" width="11" height="1" fill="#000000"/><rect x="467" y="46" width="11" height="11" fill="#808080"/><rect x="467" y="56" width="11" height="1" fill="#000000"/><rect x="477" y="46" width="1" height="11" fill="#000000"/><rect x="472" y="43" width="9" height="1" fill="#000080"/><rect x="472" y="44" width="1" height="1" fill="#000080"/><rect x="473" y="44" width="7" height="1" fill="#ffffff"/><rect x="480" y="44" width="1" height="1" fill="#000080"/><rect x="472" y="45" width="1" height="1" fill="#000080"/><rect x="473" y="45" width="1" height="1" fill="#ffffff"/><rect x="474" y="45" width="4" height="1" fill="#000080"/><rect x="478" y="45" width="2" height="1" fill="#ffffff"/><rect x="480" y="45" width="1" height="1" fill="#000080"/><rect x="472" y="46" width="1" height="1" fill="#000080"/><rect x="473" y="46" width="7" height="1" fill="#ffffff"/><rect x="480" y="46" width="1" height="1" fill="#000080"/><rect x="472" y="47" width="1" height="1" fill="#000080"/><rect x="473" y="47" width="1" height="1" fill="#ffffff"/><rect x="474" y="47" width="4" height="1" fill="#000080"/><rect x="478" y="47" width="2" height="1" fill="#ffffff"/><rect x="480" y="47" width="1" height="1" fill="#000080"/><rect x="472" y="48" width="1" height="1" fill="#000080"/><rect x="473" y="48" width="7" height="1" fill="#ffffff"/><rect x="480" y="48" width="1" height="1" fill="#000080"/><rect x="472" y="49" width="1" height="1" fill="#000080"/><rect x="473" y="49" width="1" height="1" fill="#ffffff"/><rect x="474" y="49" width="4" height="1" fill="#000080"/><rect x="478" y="49" width="2" height="1" fill="#ffffff"/><rect x="480" y="49" width="1" height="1" fill="#000080"/><rect x="472" y="50" width="1" height="1" fill="#000080"/><rect x="473" y="50" width="7" height="1" fill="#ffffff"/><rect x="480" y="50" width="1" height="1" fill="#000080"/><rect x="472" y="51" width="9" height="1" fill="#000080"/><rect x="525" y="43" width="19" height="17" fill="#c0c0c0"/><rect x="540" y="45" width="1" height="1" fill="#0a780a"/><rect x="539" y="46" width="1" height="1" fill="#0a780a"/><rect x="537" y="47" width="2" height="1" fill="#0a780a"/><rect x="536" y="48" width="2" height="1" fill="#0a780a"/><rect x="536" y="49" width="1" height="1" fill="#0a780a"/><rect x="535" y="50" width="2" height="1" fill="#0a780a"/><rect x="534" y="51" width="2" height="1" fill="#0a780a"/><rect x="529" y="52" width="2" height="1" fill="#0a780a"/><rect x="534" y="52" width="2" height="1" fill="#0a780a"/><rect x="529" y="53" width="3" height="1" fill="#0a780a"/><rect x="533" y="53" width="3" height="1" fill="#0a780a"/><rect x="530" y="54" width="5" height="1" fill="#0a780a"/><rect x="530" y="55" width="4" height="1" fill="#0a780a"/><rect x="531" y="56" width="3" height="1" fill="#0a780a"/><rect x="531" y="57" width="1" height="1" fill="#0a780a"/><rect x="555" y="43" width="19" height="17" fill="#c0c0c0"/><rect x="558" y="45" width="3" height="1" fill="#f00000"/><rect x="570" y="45" width="1" height="1" fill="#800000"/><rect x="559" y="46" width="3" height="1" fill="#f00000"/><rect x="569" y="46" width="1" height="1" fill="#800000"/><rect x="560" y="47" width="3" height="1" fill="#f00000"/><rect x="568" y="47" width="1" height="1" fill="#f00000"/><rect x="561" y="48" width="3" height="1" fill="#f00000"/><rect x="567" y="48" width="1" height="1" fill="#f00000"/><rect x="562" y="49" width="3" height="1" fill="#f00000"/><rect x="566" y="49" width="2" height="1" fill="#f00000"/><rect x="563" y="50" width="4" height="1" fill="#f00000"/><rect x="563" y="51" width="4" height="1" fill="#f00000"/><rect x="562" y="52" width="3" height="1" fill="#f00000"/><rect x="566" y="52" width="2" height="1" fill="#f00000"/><rect x="561" y="53" width="3" height="1" fill="#f00000"/><rect x="567" y="53" width="1" height="1" fill="#f00000"/><rect x="560" y="54" width="3" height="1" fill="#f00000"/><rect x="567" y="54" width="2" height="1" fill="#f00000"/><rect x="559" y="55" width="3" height="1" fill="#f00000"/><rect x="568" y="55" width="1" height="1" fill="#f00000"/><rect x="559" y="56" width="2" height="1" fill="#f00000"/><rect x="569" y="56" width="1" height="1" fill="#f00000"/><rect x="570" y="57" width="1" height="1" fill="#800000"/><rect x="585" y="43" width="19" height="17" fill="#c0c0c0"/><rect x="616" y="44" width="18" height="15" fill="url(#dith)"/><rect x="626" y="49" width="1" height="1" fill="#ffffff"/><rect x="625" y="50" width="3" height="1" fill="#ffffff"/><rect x="624" y="51" width="1" height="1" fill="#ffffff"/><rect x="625" y="51" width="1" height="1" fill="#d8d8d8"/><rect x="626" y="51" width="3" height="1" fill="#ffffff"/><rect x="623" y="52" width="6" height="1" fill="#ffffff"/><rect x="623" y="53" width="7" height="1" fill="#ffffff"/><rect x="622" y="54" width="4" height="1" fill="#ffffff"/><rect x="626" y="54" width="1" height="1" fill="#d8d8d8"/><rect x="627" y="54" width="4" height="1" fill="#ffffff"/><rect x="622" y="55" width="9" height="1" fill="#ffffff"/>
</svg>
<div class="abs" id="q">?</div>

<div class="lbl" style="top:88px;left:171px;letter-spacing:0.1px;">Stichtag</div>
<div class="lbl" style="top:107px;left:171px;letter-spacing:-0.05px;">Aktennummer</div>
<div class="lbl" style="top:126px;left:171px;letter-spacing:-0.3px;">Name</div>
<div class="lbl" style="top:145px;left:171px;letter-spacing:-0.3px;">Vorname</div>
<div class="lbl" style="top:164px;left:171px;letter-spacing:-0.2px;">AZR-Nummer</div>
<div class="lbl" style="top:202px;left:171px;letter-spacing:0px;color:#868686;">Eintrag löschen</div>
<div class="lbl" style="top:240px;left:171px;letter-spacing:-0.11px;word-spacing:0.6px;">Art der Leistung</div>
<div class="lbl" style="top:259px;left:171px;letter-spacing:-0.12px;word-spacing:0.6px;">Beginn der Leistung</div>
<div class="lbl" style="top:278px;left:171px;letter-spacing:-0.06px;word-spacing:0.6px;">Ende der Leistung</div>
<div class="lbl" style="top:297px;left:171px;letter-spacing:-0.2px;">Referenz ID</div>
<div class="lbl" style="top:316px;left:171px;letter-spacing:0px;">Aktenzeichen</div>
<div class="lbl" style="top:335px;left:171px;letter-spacing:-0.16px;word-spacing:0.6px;">Art der Änderung</div>
<div class="lbl" style="top:107px;left:591px;letter-spacing:-0.13px;">HE-Nummer</div>
<div class="lbl" style="top:392px;left:451px;letter-spacing:0px;">Erstellt/Geändert:</div>
<div class="box " style="top:87px;left:319px;width:170px;background:#fff;color:#000;"><span style="letter-spacing:-0.5px">23.10.2025</span></div>
<div class="box mono" style="top:106px;left:319px;width:170px;"><span style="letter-spacing:0.6px">51776</span></div>
<div class="box mono" style="top:106px;left:709px;width:60px;"><span style="letter-spacing:0px">1</span></div>
<div class="box " style="top:125px;left:319px;width:450px;"><span style="letter-spacing:0.03px">Katzinski</span></div>
<div class="box " style="top:144px;left:319px;width:450px;"><span style="letter-spacing:-0.05px">Colin</span></div>
<div class="box " style="top:163px;left:319px;width:450px;"><span style="letter-spacing:-0.28px">250909007038</span></div>
<div class="box " style="top:239px;left:319px;width:450px;"><span style="letter-spacing:0.07px">LEISTUNGEN_NACH_SGB_XII</span></div>
<div class="box " style="top:258px;left:319px;width:450px;"><span style="letter-spacing:-0.45px">01.10.2025</span></div>
<div class="box " style="top:277px;left:319px;width:450px;"><span style="letter-spacing:-0.45px">31.01.2026</span></div>
<div class="box " style="top:296px;left:319px;width:450px;"><span style="letter-spacing:0px"></span></div>
<div class="box " style="top:315px;left:319px;width:450px;"><span style="letter-spacing:-0.5px">051776-01</span></div>
<div class="box " style="top:334px;left:319px;width:450px;"><span style="letter-spacing:0.27px">ZUSPEICHERUNG</span></div>
<div class="abs" style="left:319px;top:204px;width:13px;height:13px;box-sizing:border-box;border:1px solid #c4c4c4;background:#fff"></div>

<div class="btn" style="left:569px"><i></i><span>Übermitteln</span></div>
<div class="btn" style="left:679px"><i></i><span style="letter-spacing:0.3px">Abbrechen</span></div>
</body></html>
